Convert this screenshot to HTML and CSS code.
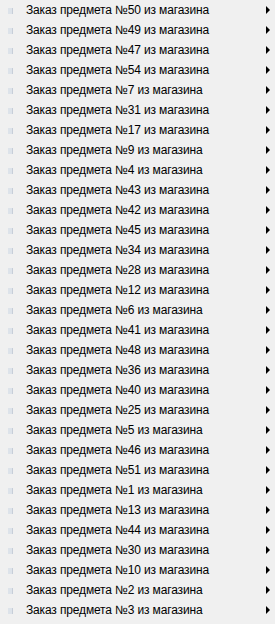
FILE: index.html
```html
<!DOCTYPE html>
<html lang="ru">
<head>
  <meta charset="UTF-8">
  <title>Меню</title>
  <link rel="stylesheet" href="styles.css">
</head>
<body>
<ul class="menu" id="menu"></ul>
<script>
const nums = [50, 49, 47, 54, 7, 31, 17, 9, 4, 43, 42, 45, 34, 28, 12, 6, 41, 48, 36, 40, 25, 5, 46, 51, 1, 13, 44, 30, 10, 2, 3];
const menu = document.getElementById("menu");
nums.forEach(n => {
  menu.innerHTML += `
    <li class="item">
      <span class="icon"></span>
      <span class="label">Заказ предмета №${n} из магазина</span>
      <span class="arrow"></span>
    </li>`;
});
</script>
</body>
</html>
```
FILE: styles.css
```css
html, body { margin: 0; padding: 0; background: #f0f0f0; }
body { width: 275px; height: 624px; overflow: hidden; font-family: "Liberation Sans", Arial, sans-serif; font-size: 12px; color: #000; }
.menu { list-style: none; margin: 0; padding: 0; }
.item { display: flex; align-items: center; height: 20px; }
.icon { width: 5px; height: 6px; margin-left: 8px; margin-right: 13px; margin-top: 1px; background: #dde3ea; border-right: 1px solid #c7ced8; box-sizing: border-box; }
.label { flex: 1; white-space: nowrap; letter-spacing: -0.15px; }
.arrow { width: 0; height: 0; margin-right: 5px; border-top: 4px solid transparent; border-bottom: 4px solid transparent; border-left: 4px solid #000; }
```
